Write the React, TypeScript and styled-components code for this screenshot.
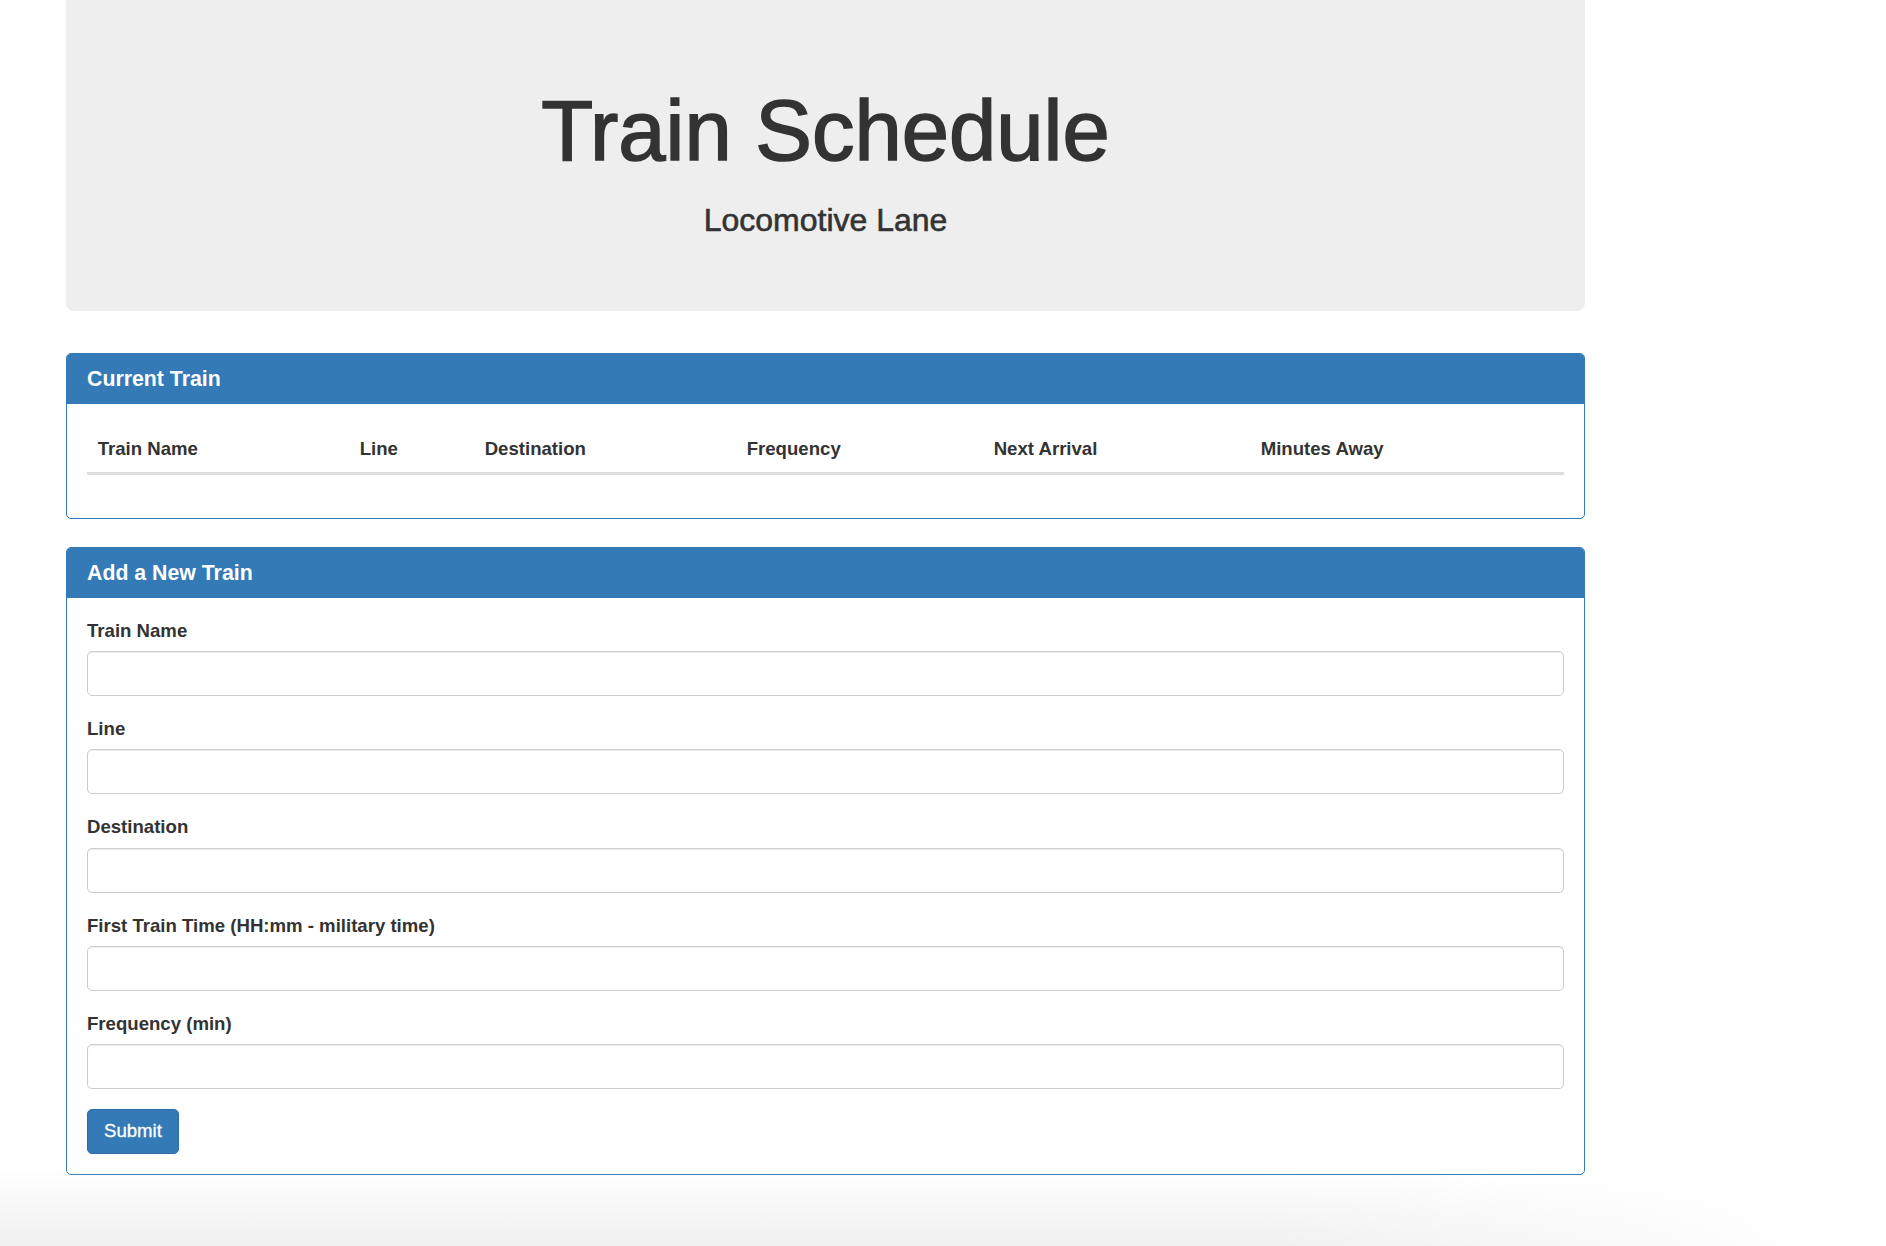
import React from "react";
import styled, { createGlobalStyle } from "styled-components";

const GlobalStyle = createGlobalStyle`
  html, body {
    margin: 0;
    padding: 0;
    background: #ffffff;
  }
  body {
    font-family: "Liberation Sans", Helvetica, Arial, sans-serif;
    font-size: 18.6px;
    line-height: 26.6px;
    color: #333333;
  }
  * { box-sizing: border-box; }
`;

const Page = styled.div`
  display: flex;
  flex-direction: column;
  min-height: 1246px;
`;

const Container = styled.div`
  width: 1519px;
  margin-left: 66px;
  display: flex;
  flex-direction: column;
`;

const Jumbotron = styled.header`
  background: #eeeeee;
  border-radius: 0 0 8px 8px;
  padding: 84px 0 73px;
  text-align: center;
`;

const Title = styled.h1`
  margin: 0;
  font-size: 85px;
  line-height: 94px;
  font-weight: 400;
  color: #333333;
  -webkit-text-stroke: 1.6px #333333;
`;

const Subtitle = styled.h3`
  margin: 25px 0 0;
  font-size: 32px;
  line-height: 35px;
  font-weight: 400;
  color: #333333;
  -webkit-text-stroke: 0.6px #333333;
`;

const Panel = styled.section<{ $top: number }>`
  margin-top: ${(p) => p.$top}px;
  border: 1px solid #337ab7;
  border-radius: 5px;
  background: #ffffff;
  overflow: hidden;
`;

const PanelHeading = styled.div`
  background: #337ab7;
  color: #ffffff;
  padding: 13px 20px;
`;

const PanelTitle = styled.h3`
  margin: 0;
  font-size: 21.3px;
  line-height: 24px;
  font-weight: 700;
`;

const PanelBody = styled.div`
  padding: 20px;
`;

const Table = styled.table`
  width: 100%;
  border-collapse: collapse;
  table-layout: fixed;
  margin-bottom: 23px;
`;

const Th = styled.th<{ $w?: number }>`
  width: ${(p) => (p.$w ? `${p.$w}px` : "auto")};
  text-align: left;
  font-weight: 700;
  padding: 10.5px 10.7px;
  line-height: 27px;
  border-bottom: 3px solid #dddddd;
`;

const Form = styled.form`
  display: flex;
  flex-direction: column;
`;

const FormGroup = styled.div`
  display: flex;
  flex-direction: column;
  margin-bottom: 20px;
`;

const Label = styled.label`
  font-weight: 700;
  line-height: 26.6px;
  margin-bottom: 6.6px;
`;

const Input = styled.input`
  width: 100%;
  height: 45px;
  padding: 8px 16px;
  font: inherit;
  color: #555555;
  background: #ffffff;
  border: 1px solid #cccccc;
  border-radius: 5px;
  box-shadow: inset 0 1px 1px rgba(0, 0, 0, 0.075);
  outline: none;
`;

const SubmitButton = styled.button`
  align-self: flex-start;
  height: 45px;
  padding: 8px 16px;
  font: inherit;
  line-height: 26.6px;
  color: #ffffff;
  -webkit-text-stroke: 0.3px #ffffff;
  background: #337ab7;
  border: 1px solid #2e6da4;
  border-radius: 5px;
  cursor: pointer;
`;

const Shade = styled.div`
  flex: 1;
  margin-top: -6px;
  background: linear-gradient(to bottom, rgba(240, 240, 240, 0) 0%, #f0f0f0 100%);
  -webkit-mask-image: linear-gradient(to right, #000 0%, #000 68%, transparent 97%);
  mask-image: linear-gradient(to right, #000 0%, #000 68%, transparent 97%);
`;

const columns: { label: string; w?: number }[] = [
  { label: "Train Name", w: 262 },
  { label: "Line", w: 125 },
  { label: "Destination", w: 262 },
  { label: "Frequency", w: 247 },
  { label: "Next Arrival", w: 267 },
  { label: "Minutes Away" },
];

const fields = [
  { id: "train-name", label: "Train Name" },
  { id: "line", label: "Line" },
  { id: "destination", label: "Destination" },
  { id: "first-train", label: "First Train Time (HH:mm - military time)" },
  { id: "frequency", label: "Frequency (min)" },
];

export default function App() {
  return (
    <>
      <GlobalStyle />
      <Page>
        <Container>
          <Jumbotron>
            <Title>Train Schedule</Title>
            <Subtitle>Locomotive Lane</Subtitle>
          </Jumbotron>

          <Panel $top={42}>
            <PanelHeading>
              <PanelTitle>Current Train</PanelTitle>
            </PanelHeading>
            <PanelBody>
              <Table>
                <thead>
                  <tr>
                    {columns.map((c) => (
                      <Th key={c.label} $w={c.w}>
                        {c.label}
                      </Th>
                    ))}
                  </tr>
                </thead>
                <tbody />
              </Table>
            </PanelBody>
          </Panel>

          <Panel $top={28}>
            <PanelHeading>
              <PanelTitle>Add a New Train</PanelTitle>
            </PanelHeading>
            <PanelBody>
              <Form onSubmit={(e) => e.preventDefault()}>
                {fields.map((f) => (
                  <FormGroup key={f.id}>
                    <Label htmlFor={f.id}>{f.label}</Label>
                    <Input id={f.id} type="text" />
                  </FormGroup>
                ))}
                <SubmitButton type="submit">Submit</SubmitButton>
              </Form>
            </PanelBody>
          </Panel>
        </Container>
        <Shade />
      </Page>
    </>
  );
}
